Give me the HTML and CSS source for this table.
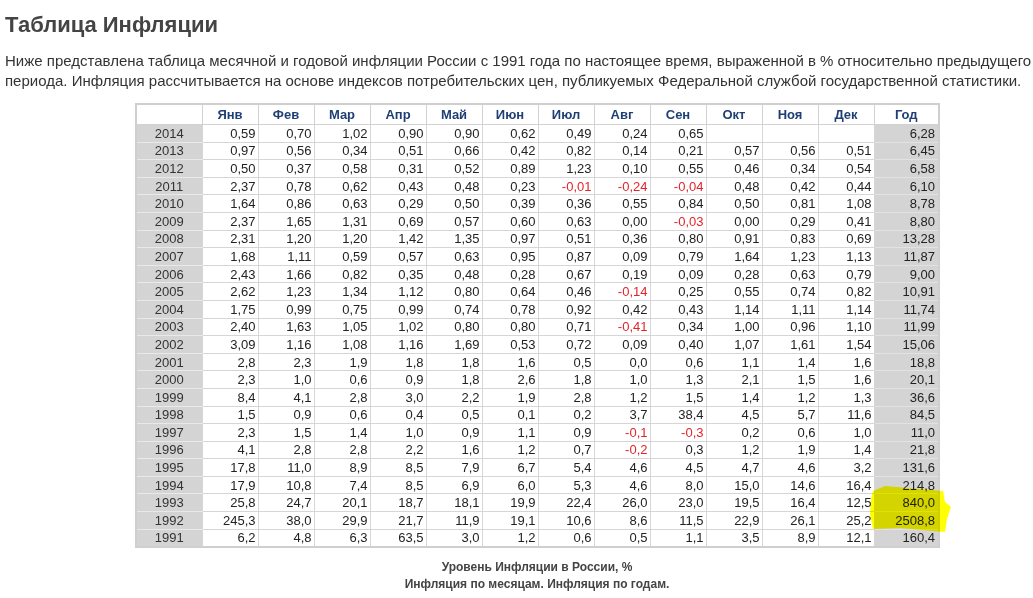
FILE: index.html
```html
<!DOCTYPE html>
<html lang="ru">
<head>
<meta charset="utf-8">
<title>Таблица Инфляции</title>
<link rel="stylesheet" href="styles.css">
</head>
<body>
<div class="page">
  <h1 class="title">Таблица Инфляции</h1>
  <p class="intro">Ниже представлена таблица месячной и годовой инфляции России с 1991 года по настоящее время, выраженной в % относительно предыдущего периода. Инфляция рассчитывается на основе индексов потребительских цен, публикуемых Федеральной службой государственной статистики.</p>
  <div class="table-wrap">
    <table class="infl" id="infl">
      <colgroup>
        <col class="c-year">
        <col class="c-m"><col class="c-m"><col class="c-m"><col class="c-m"><col class="c-m"><col class="c-m">
        <col class="c-m"><col class="c-m"><col class="c-m"><col class="c-m"><col class="c-m"><col class="c-m">
        <col class="c-total">
      </colgroup>
      <thead>
        <tr class="head">
          <th class="corner"></th>
          <th>Янв</th><th>Фев</th><th>Мар</th><th>Апр</th><th>Май</th><th>Июн</th>
          <th>Июл</th><th>Авг</th><th>Сен</th><th>Окт</th><th>Ноя</th><th>Дек</th>
          <th>Год</th>
        </tr>
      </thead>
      <tbody id="tbody"></tbody>
    </table>
    <svg class="marker" width="830" height="450" viewBox="0 0 830 450" aria-hidden="true">
      <polygon points="738,388 750,383 808,388 810,399 816,404 812,416 810,429 765,425 738,426 735,411 736,396"/>
    </svg>
  </div>
  <div class="caption">
    <div>Уровень Инфляции в России, %</div>
    <div>Инфляция по месяцам. Инфляция по годам.</div>
  </div>
</div>
<script src="app.js"></script>
</body>
</html>
```
FILE: styles.css
```css
html, body {
  margin: 0;
  padding: 0;
  background: #ffffff;
  overflow: hidden;
}
body {
  font-family: "Liberation Sans", Arial, sans-serif;
  color: #333;
}
.page {
  width: 1064px;
  padding-left: 5px;
}
.title {
  margin: 12px 0 0 0;
  font-size: 22px;
  line-height: 26px;
  font-weight: bold;
  color: #444;
}
.intro {
  margin: 13px 0 0 0;
  font-size: 15px;
  line-height: 20px;
  color: #333;
}
.table-wrap {
  position: relative;
  width: 804px;
  margin: 12px auto 0 auto;
}
.infl {
  table-layout: fixed;
  width: 804px;
  border-collapse: collapse;
  border: 2px solid #cfcfcf;
  font-size: 13px;
  color: #222;
}
.c-year { width: 66px; }
.c-m { width: 56px; }
.c-total { width: 65px; }
.infl th {
  height: 19px;
  padding: 0;
  font-weight: bold;
  color: #1f3f74;
  text-align: center;
  background: #fff;
  border: 1px solid #d2d2d2;
}
.infl td {
  height: 16.6px;
  padding: 0 2px 0 0;
  line-height: 15px;
  text-align: right;
  background: #fff;
  border: 1px solid #d6d6d6;
}
.infl td.year {
  text-align: center;
  padding: 0;
  background: #d4d4d4;
  border-top-color: #e9e9e9;
  border-bottom-color: #e9e9e9;
  color: #333;
}
.infl td.total {
  background: #d4d4d4;
  padding-right: 3px;
  border-top-color: #e2e2e2;
  border-bottom-color: #e2e2e2;
}
.infl td.neg {
  color: #e2242b;
}
.marker {
  position: absolute;
  left: 0;
  top: 0;
  overflow: visible;
  pointer-events: none;
  mix-blend-mode: multiply;
}
.marker polygon {
  fill: #ffff00;
}
.caption {
  margin: 11px auto 0 auto;
  width: 804px;
  text-align: center;
  font-size: 12px;
  line-height: 17px;
  font-weight: bold;
  color: #444;
}
```
FILE: app.js
```js
var data = [
  ["2014","0,59","0,70","1,02","0,90","0,90","0,62","0,49","0,24","0,65","","","","6,28"],
  ["2013","0,97","0,56","0,34","0,51","0,66","0,42","0,82","0,14","0,21","0,57","0,56","0,51","6,45"],
  ["2012","0,50","0,37","0,58","0,31","0,52","0,89","1,23","0,10","0,55","0,46","0,34","0,54","6,58"],
  ["2011","2,37","0,78","0,62","0,43","0,48","0,23","-0,01","-0,24","-0,04","0,48","0,42","0,44","6,10"],
  ["2010","1,64","0,86","0,63","0,29","0,50","0,39","0,36","0,55","0,84","0,50","0,81","1,08","8,78"],
  ["2009","2,37","1,65","1,31","0,69","0,57","0,60","0,63","0,00","-0,03","0,00","0,29","0,41","8,80"],
  ["2008","2,31","1,20","1,20","1,42","1,35","0,97","0,51","0,36","0,80","0,91","0,83","0,69","13,28"],
  ["2007","1,68","1,11","0,59","0,57","0,63","0,95","0,87","0,09","0,79","1,64","1,23","1,13","11,87"],
  ["2006","2,43","1,66","0,82","0,35","0,48","0,28","0,67","0,19","0,09","0,28","0,63","0,79","9,00"],
  ["2005","2,62","1,23","1,34","1,12","0,80","0,64","0,46","-0,14","0,25","0,55","0,74","0,82","10,91"],
  ["2004","1,75","0,99","0,75","0,99","0,74","0,78","0,92","0,42","0,43","1,14","1,11","1,14","11,74"],
  ["2003","2,40","1,63","1,05","1,02","0,80","0,80","0,71","-0,41","0,34","1,00","0,96","1,10","11,99"],
  ["2002","3,09","1,16","1,08","1,16","1,69","0,53","0,72","0,09","0,40","1,07","1,61","1,54","15,06"],
  ["2001","2,8","2,3","1,9","1,8","1,8","1,6","0,5","0,0","0,6","1,1","1,4","1,6","18,8"],
  ["2000","2,3","1,0","0,6","0,9","1,8","2,6","1,8","1,0","1,3","2,1","1,5","1,6","20,1"],
  ["1999","8,4","4,1","2,8","3,0","2,2","1,9","2,8","1,2","1,5","1,4","1,2","1,3","36,6"],
  ["1998","1,5","0,9","0,6","0,4","0,5","0,1","0,2","3,7","38,4","4,5","5,7","11,6","84,5"],
  ["1997","2,3","1,5","1,4","1,0","0,9","1,1","0,9","-0,1","-0,3","0,2","0,6","1,0","11,0"],
  ["1996","4,1","2,8","2,8","2,2","1,6","1,2","0,7","-0,2","0,3","1,2","1,9","1,4","21,8"],
  ["1995","17,8","11,0","8,9","8,5","7,9","6,7","5,4","4,6","4,5","4,7","4,6","3,2","131,6"],
  ["1994","17,9","10,8","7,4","8,5","6,9","6,0","5,3","4,6","8,0","15,0","14,6","16,4","214,8"],
  ["1993","25,8","24,7","20,1","18,7","18,1","19,9","22,4","26,0","23,0","19,5","16,4","12,5","840,0"],
  ["1992","245,3","38,0","29,9","21,7","11,9","19,1","10,6","8,6","11,5","22,9","26,1","25,2","2508,8"],
  ["1991","6,2","4,8","6,3","63,5","3,0","1,2","0,6","0,5","1,1","3,5","8,9","12,1","160,4"]
];
var tbody = document.getElementById("tbody");
var html = "";
for (var i = 0; i < data.length; i++) {
  var r = data[i];
  html += "<tr>";
  for (var j = 0; j < r.length; j++) {
    var cls = "";
    if (j === 0) cls = "year";
    else if (j === r.length - 1) cls = "total";
    else if (r[j].charAt(0) === "-") cls = "neg";
    html += '<td' + (cls ? ' class="' + cls + '"' : '') + '>' + r[j] + '</td>';
  }
  html += "</tr>";
}
tbody.innerHTML = html;
```
